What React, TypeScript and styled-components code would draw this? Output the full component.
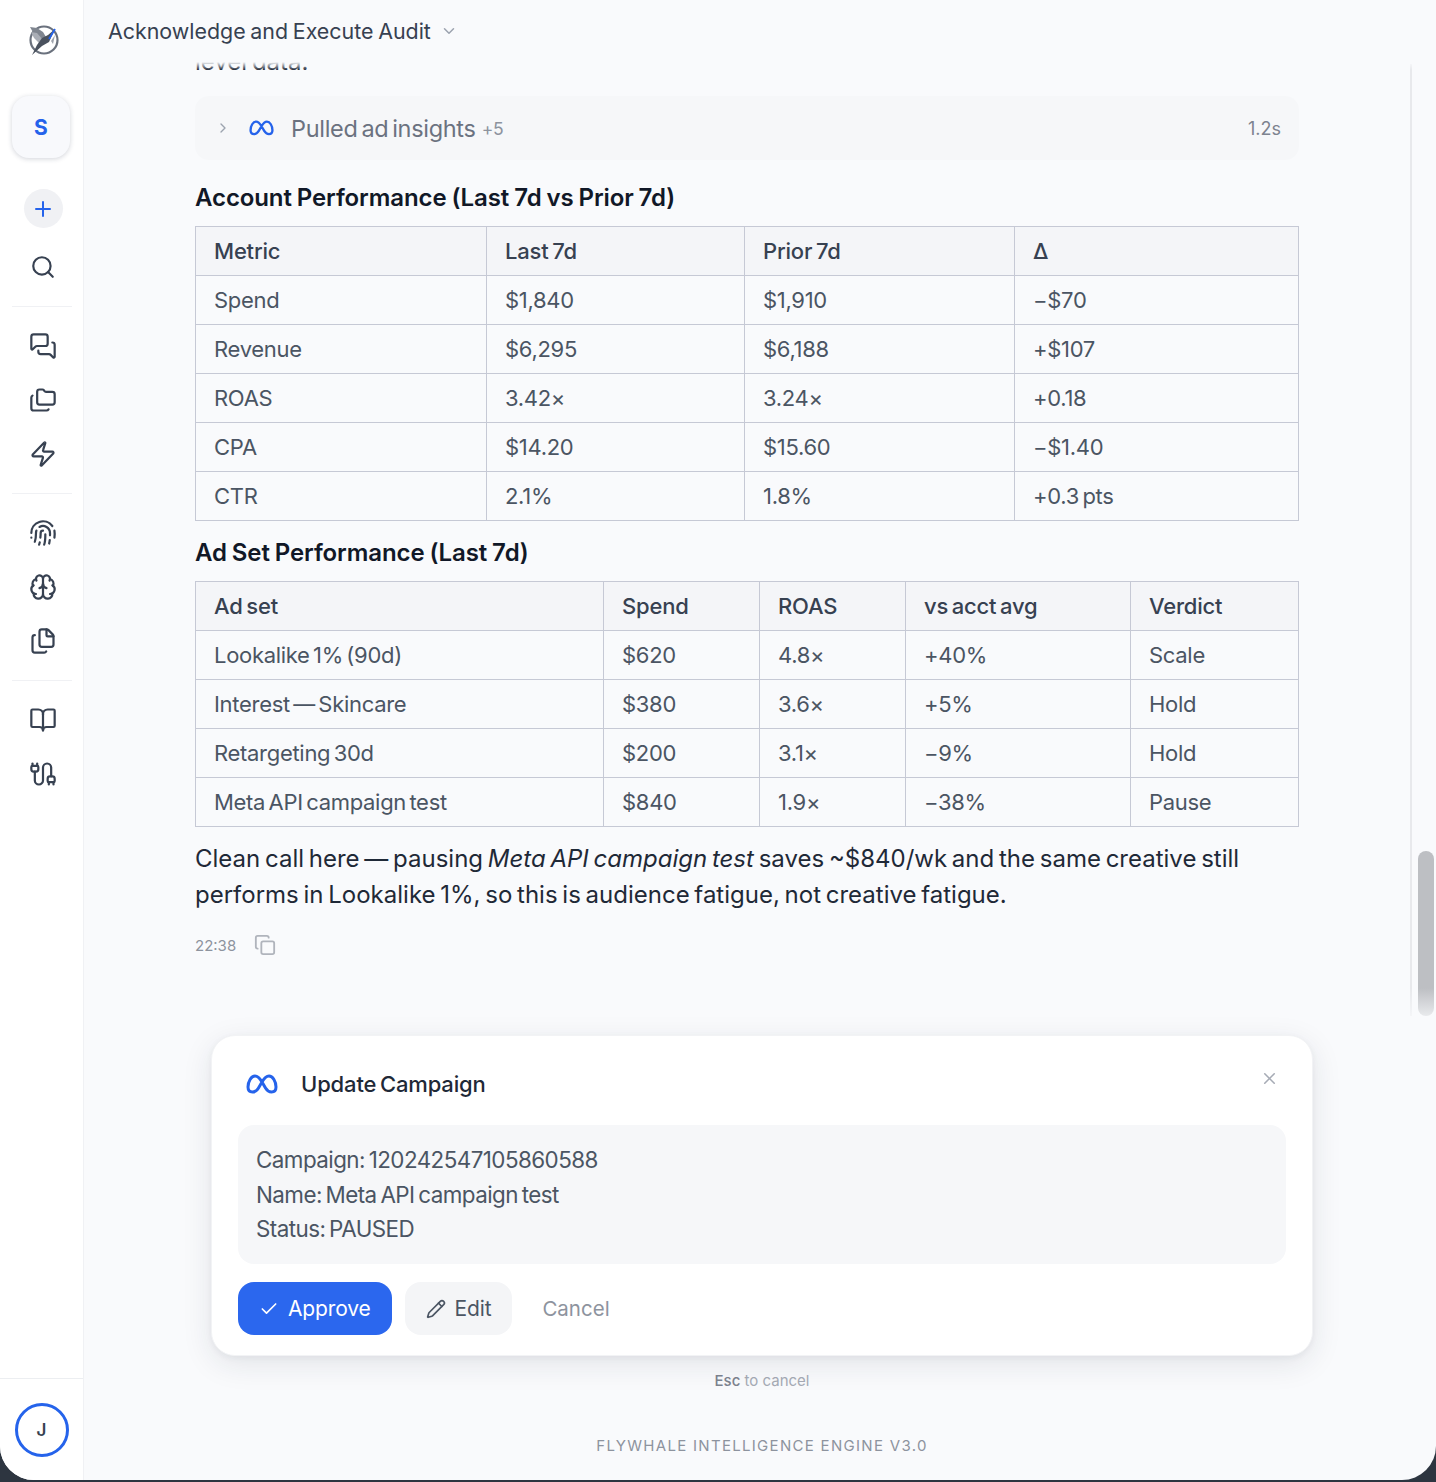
import styled, { createGlobalStyle } from "styled-components"
import {
  BookOpen,
  Brain,
  Cable,
  Check,
  ChevronDown,
  ChevronRight,
  Copy,
  Files,
  Fingerprint,
  Folders,
  MessagesSquare,
  Pencil,
  Plus,
  Search,
  X,
  Zap,
} from "lucide-react"

const GlobalStyle = createGlobalStyle`
  html, body {
    margin: 0;
    padding: 0;
    background: #2d3540;
  }
  * {
    box-sizing: border-box;
  }
  body {
    font-family: "Inter", "Liberation Sans", sans-serif;
  }
`

const Frame = styled.div`
  display: flex;
  width: 1436px;
  height: 1480px;
  margin-bottom: 2px;
  background: #f9fafc;
  border-radius: 0 0 34px 34px;
  overflow: hidden;
`

const Rail = styled.aside`
  display: flex;
  flex-direction: column;
  align-items: center;
  flex: 0 0 84px;
  background: #fff;
  border-right: 1px solid #f0f1f4;
`

const LogoSlot = styled.div`
  display: flex;
  align-items: center;
  justify-content: center;
  height: 80px;
  width: 100%;
  padding-left: 4px;
`

const WorkspaceButton = styled.button`
  width: 58px;
  height: 62px;
  margin: 16px 2px 0 0;
  padding: 0 0 0 1px;
  border: 0;
  border-radius: 17px;
  background: #f8f9fc;
  box-shadow: 0 1px 5px rgba(30, 40, 70, 0.2);
  color: #2563eb;
  font: 700 21px "Inter", sans-serif;
`

const NewButton = styled.button`
  display: flex;
  align-items: center;
  justify-content: center;
  width: 39px;
  height: 39px;
  margin: 31px 0 12px 3px;
  padding: 0;
  border: 0;
  border-radius: 50%;
  background: #f0f1f4;
  color: #2563eb;
`

const RailIcon = styled.div`
  display: flex;
  align-items: center;
  justify-content: center;
  width: 100%;
  height: 54px;
  padding-left: 3px;
  color: #374151;
`

const RailDivider = styled.hr`
  width: 60px;
  height: 1px;
  margin: 12px 0;
  border: 0;
  background: #f0f1f4;
`

const RailFoot = styled.div`
  display: flex;
  justify-content: center;
  width: 100%;
  margin-top: auto;
  padding: 24px 0 23px;
  border-top: 1px solid #eceef1;
`

const Avatar = styled.div`
  display: flex;
  align-items: center;
  justify-content: center;
  width: 54px;
  height: 54px;
  border: 3px solid #2563eb;
  border-radius: 50%;
  color: #374151;
  font-size: 17px;
  font-weight: 600;
`

const Main = styled.main`
  display: flex;
  flex-direction: column;
  flex: 1;
  min-width: 0;
`

const Header = styled.header`
  display: flex;
  align-items: center;
  gap: 9px;
  flex: 0 0 62px;
  padding-left: 24px;
  color: #374151;
`

const HeaderTitle = styled.h1`
  margin: 0;
  font-size: 21.4px;
  font-weight: 400;
  word-spacing: -1.3px;
`

const Chevron = styled(ChevronDown)`
  color: #9ca3af;
`

const ScrollArea = styled.div`
  position: relative;
  flex: 0 0 954px;
  overflow: hidden;
  padding-left: 111px;
`

const TopFade = styled.div`
  position: absolute;
  top: 0;
  left: 0;
  right: 0;
  height: 8px;
  background: linear-gradient(#f9fafc, rgba(249, 250, 252, 0));
`

const BottomFade = styled.div`
  position: absolute;
  bottom: 0;
  left: 0;
  right: 0;
  height: 28px;
  background: linear-gradient(rgba(249, 250, 252, 0), rgba(249, 250, 252, 0.72));
`

const ScrollLine = styled.div`
  position: absolute;
  top: 2px;
  bottom: 0;
  left: 1326px;
  width: 2px;
  background: #e8e9ec;
`

const ScrollThumb = styled.div`
  position: absolute;
  top: 789px;
  left: 1334px;
  width: 16px;
  height: 165px;
  border-radius: 8px;
  background: #bdbfc3;
`

const Column = styled.div`
  width: 1104px;
  margin-top: -18px;
`

const Paragraph = styled.p`
  margin: 0;
  color: #1f2937;
  font-size: 24px;
  line-height: 36px;
  word-spacing: -2px;
  white-space: nowrap;
`

const ToolRow = styled.div`
  display: flex;
  align-items: center;
  height: 64px;
  margin-top: 16px;
  padding: 0 18px 0 20px;
  border-radius: 14px;
  background: #f6f7f9;
`

const ToolChevron = styled(ChevronRight)`
  flex: none;
  margin-right: 18px;
  color: #9ca3af;
`

const MetaMark = styled.svg<{ $width: number }>`
  flex: none;
  width: ${(p) => p.$width}px;
  fill: none;
  stroke: #2563eb;
  stroke-width: 3;
  stroke-linejoin: round;
`

const ToolName = styled.span`
  margin-left: 17px;
  color: #6b7280;
  font-size: 23.5px;
  letter-spacing: -0.3px;
  word-spacing: -2.5px;
`

const ToolCount = styled.span`
  margin-left: 6px;
  color: #8d939e;
  font-size: 17.5px;
  letter-spacing: -0.3px;
`

const ToolTime = styled.span`
  margin-left: auto;
  color: #7d838f;
  font-size: 18px;
`

const SectionTitle = styled.h3<{ $top: number }>`
  margin: ${(p) => p.$top}px 0 13px;
  color: #111827;
  font-size: 24px;
  font-weight: 600;
  line-height: 30px;
  letter-spacing: -0.1px;
  word-spacing: -1px;
`

const Table = styled.table`
  width: 1103px;
  border-collapse: collapse;
  table-layout: fixed;
  border: 1px solid #c6c9d5;
`

const HeadCell = styled.th`
  height: 49px;
  padding: 0 18px;
  border: 1px solid #c6c9d5;
  background: #f4f5f8;
  color: #374151;
  font-size: 22px;
  font-weight: 500;
  letter-spacing: -0.2px;
  word-spacing: -2px;
  text-align: left;
`

const Cell = styled.td`
  height: 49px;
  padding: 0 18px;
  border: 1px solid #c6c9d5;
  color: #4b5563;
  font-size: 22px;
  letter-spacing: -0.3px;
  word-spacing: -2.5px;
  white-space: nowrap;
`

const Closing = styled(Paragraph)`
  margin-top: 14px;
`

const MetaLine = styled.div`
  display: flex;
  align-items: center;
  gap: 18px;
  height: 24px;
  margin-top: 20px;
  color: #8d939e;
  font-size: 15px;
`

const CopyIcon = styled(Copy)`
  color: #b0b4bc;
`

const Composer = styled.section`
  display: flex;
  flex-direction: column;
  align-items: center;
  padding-top: 19px;
  padding-left: 4px;
`

const Card = styled.div`
  position: relative;
  width: 1102px;
  height: 321px;
  padding: 26px 26px 0;
  border: 1px solid #f2f3f5;
  border-radius: 24px;
  background: #fff;
  box-shadow: 0 8px 30px rgba(30, 40, 60, 0.1), 0 2px 6px rgba(30, 40, 60, 0.05);
`

const CardHead = styled.div`
  display: flex;
  align-items: center;
  gap: 23px;
  height: 44px;
  padding-left: 8px;
  color: #1f2937;
  font-size: 22px;
  font-weight: 500;
  letter-spacing: -0.15px;
  word-spacing: -2px;
`

const CloseButton = styled(X)`
  position: absolute;
  top: 33px;
  right: 33px;
  color: #a6abb5;
`

const Details = styled.div`
  height: 139px;
  margin-top: 19px;
  padding: 18px;
  border-radius: 16px;
  background: #f6f7f9;
  color: #4b5563;
  font-size: 22.4px;
  line-height: 34.6px;
  letter-spacing: -0.55px;
  word-spacing: -2px;
`

const Actions = styled.div`
  display: flex;
  align-items: center;
  margin-top: 18px;
  gap: 13px;
`

const Button = styled.button<{ $primary?: boolean }>`
  display: flex;
  align-items: center;
  gap: 9px;
  height: 53px;
  padding: 0 21px;
  border: 0;
  border-radius: 16px;
  background: ${(p) => (p.$primary ? "#2b67ee" : "#f4f5f7")};
  color: ${(p) => (p.$primary ? "#fff" : "#4b5563")};
  font: 400 21px "Inter", sans-serif;
  letter-spacing: -0.15px;
`

const CancelButton = styled.button`
  margin-left: 17px;
  padding: 0;
  border: 0;
  background: none;
  color: #8d939e;
  font: 400 20.5px "Inter", sans-serif;
`

const Hint = styled.div`
  margin-top: 16px;
  color: #a6abb5;
  font-size: 15px;
  line-height: 18px;
`

const HintKey = styled.span`
  color: #7d838f;
  font-weight: 500;
`

const Footer = styled.div`
  margin-top: 47px;
  color: #8d939e;
  font-size: 15px;
  letter-spacing: 1.3px;
  line-height: 18px;
`

const MetaLogo = ({ width }: { width: number }) => (
  <MetaMark $width={width} viewBox="0 0 32 20">
    <path d="M6.5 18C3.5 18 2 16 2 13C2 7.5 5.2 2 9 2C12 2 14 4.5 16 8L19.5 14C21 16.5 22.5 18 25.5 18C28.5 18 30 16 30 13C30 7.5 26.8 2 23 2C20 2 18 4.5 16 8L12.5 14C11 16.5 9.5 18 6.5 18Z" />
  </MetaMark>
)

const BrandLogo = () => (
  <svg width="44" height="44" viewBox="0 0 44 44" fill="none">
    <circle cx="22" cy="22" r="13.5" stroke="#6a717d" strokeWidth="2.2" />
    <path d="M8 9L15 10L21 14L24 19L19 23L12 16Z" fill="#7f858f" />
    <path d="M9 14L15 15L21 22L17 25L12 20Z" fill="#a9adb5" />
    <path d="M33 11L27 24L20 28L10 37L15 27L20 20L26 17Z" fill="#4a525e" />
    <path d="M27 21L33 11" stroke="#2563eb" strokeWidth="1.8" />
    <path d="M29 23L33 17L31 26Z" fill="#9ea3ac" />
  </svg>
)

const accountRows = [
  ["Spend", "$1,840", "$1,910", "−$70"],
  ["Revenue", "$6,295", "$6,188", "+$107"],
  ["ROAS", "3.42×", "3.24×", "+0.18"],
  ["CPA", "$14.20", "$15.60", "−$1.40"],
  ["CTR", "2.1%", "1.8%", "+0.3 pts"],
]

const adSetRows = [
  ["Lookalike 1% (90d)", "$620", "4.8×", "+40%", "Scale"],
  ["Interest — Skincare", "$380", "3.6×", "+5%", "Hold"],
  ["Retargeting 30d", "$200", "3.1×", "−9%", "Hold"],
  ["Meta API campaign test", "$840", "1.9×", "−38%", "Pause"],
]

const DataTable = ({ widths, head, rows }: { widths: number[]; head: string[]; rows: string[][] }) => (
  <Table>
    <colgroup>
      {widths.map((w, i) => (
        <col key={i} width={w} />
      ))}
    </colgroup>
    <thead>
      <tr>
        {head.map((h) => (
          <HeadCell key={h}>{h}</HeadCell>
        ))}
      </tr>
    </thead>
    <tbody>
      {rows.map((row) => (
        <tr key={row[0]}>
          {row.map((c, i) => (
            <Cell key={i}>{c}</Cell>
          ))}
        </tr>
      ))}
    </tbody>
  </Table>
)

export default function App() {
  return (
    <>
      <GlobalStyle />
      <Frame>
        <Rail>
          <LogoSlot>
            <BrandLogo />
          </LogoSlot>
          <WorkspaceButton>S</WorkspaceButton>
          <NewButton>
            <Plus size={24} strokeWidth={2} />
          </NewButton>
          <RailIcon>
            <Search size={26} strokeWidth={2} />
          </RailIcon>
          <RailDivider />
          <RailIcon>
            <MessagesSquare size={28} strokeWidth={1.9} />
          </RailIcon>
          <RailIcon>
            <Folders size={28} strokeWidth={1.9} />
          </RailIcon>
          <RailIcon>
            <Zap size={28} strokeWidth={1.9} />
          </RailIcon>
          <RailDivider />
          <RailIcon>
            <Fingerprint size={28} strokeWidth={1.9} />
          </RailIcon>
          <RailIcon>
            <Brain size={28} strokeWidth={1.9} />
          </RailIcon>
          <RailIcon>
            <Files size={28} strokeWidth={1.9} />
          </RailIcon>
          <RailDivider />
          <RailIcon>
            <BookOpen size={28} strokeWidth={1.9} />
          </RailIcon>
          <RailIcon>
            <Cable size={28} strokeWidth={1.9} />
          </RailIcon>
          <RailFoot>
            <Avatar>J</Avatar>
          </RailFoot>
        </Rail>
        <Main>
          <Header>
            <HeaderTitle>Acknowledge and Execute Audit</HeaderTitle>
            <Chevron size={18} />
          </Header>
          <ScrollArea>
            <Column>
              <Paragraph>level data.</Paragraph>
              <ToolRow>
                <ToolChevron size={16} />
                <MetaLogo width={25} />
                <ToolName>Pulled ad insights</ToolName>
                <ToolCount>+5</ToolCount>
                <ToolTime>1.2s</ToolTime>
              </ToolRow>
              <SectionTitle $top={23}>Account Performance (Last 7d vs Prior 7d)</SectionTitle>
              <DataTable
                widths={[291, 258, 270, 284]}
                head={["Metric", "Last 7d", "Prior 7d", "Δ"]}
                rows={accountRows}
              />
              <SectionTitle $top={17}>Ad Set Performance (Last 7d)</SectionTitle>
              <DataTable
                widths={[408, 156, 146, 225, 168]}
                head={["Ad set", "Spend", "ROAS", "vs acct avg", "Verdict"]}
                rows={adSetRows}
              />
              <Closing>
                Clean call here — pausing <em>Meta API campaign test</em> saves ~$840/wk and the same creative still
                <br />
                performs in Lookalike 1%, so this is audience fatigue, not creative fatigue.
              </Closing>
              <MetaLine>
                22:38
                <CopyIcon size={22} />
              </MetaLine>
            </Column>
            <ScrollLine />
            <ScrollThumb />
            <TopFade />
            <BottomFade />
          </ScrollArea>
          <Composer>
            <Card>
              <CardHead>
                <MetaLogo width={32} />
                Update Campaign
              </CardHead>
              <CloseButton size={19} />
              <Details>
                Campaign: 120242547105860588
                <br />
                Name: Meta API campaign test
                <br />
                Status: PAUSED
              </Details>
              <Actions>
                <Button $primary>
                  <Check size={20} />
                  Approve
                </Button>
                <Button>
                  <Pencil size={20} />
                  Edit
                </Button>
                <CancelButton>Cancel</CancelButton>
              </Actions>
            </Card>
            <Hint>
              <HintKey>Esc</HintKey> to cancel
            </Hint>
            <Footer>FLYWHALE INTELLIGENCE ENGINE V3.0</Footer>
          </Composer>
        </Main>
      </Frame>
    </>
  )
}
